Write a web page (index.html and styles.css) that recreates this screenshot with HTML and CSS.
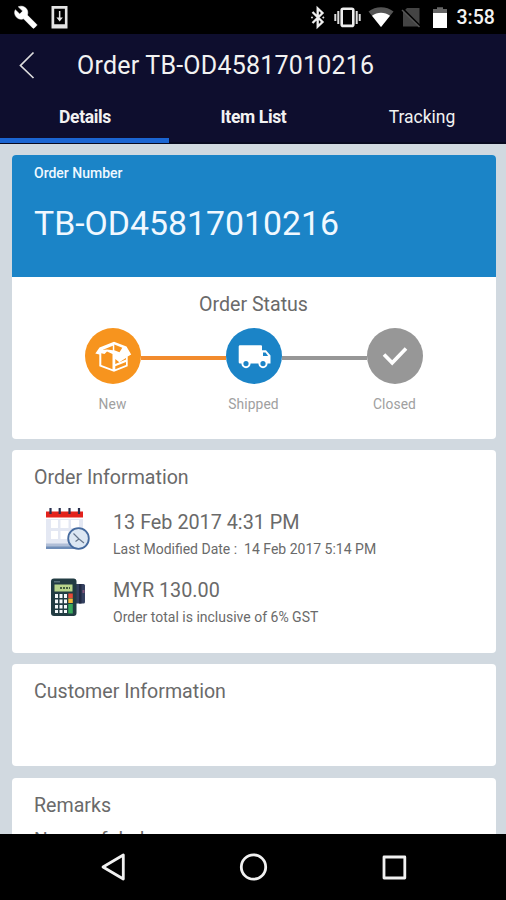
FILE: index.html
```html
<!DOCTYPE html>
<html lang="en">
<head>
<meta charset="utf-8">
<title>Order TB-OD45817010216</title>
<link rel="stylesheet" href="styles.css">
</head>
<body>
<div class="phone">
  <div class="statusbar">
    <svg class="status-icons" width="506" height="34" viewBox="0 0 506 34">
      <path fill="#fff" stroke="#fff" stroke-width=".6" d="M36.500 24.300l-9.200-9.200c1-2.400.4-5.100-1.500-7-2-2-5.100-2.400-7.500-1.300l4.400 4.300-3 3-4.400-4.300c-1.200 2.400-.7 5.500 1.300 7.500 1.900 1.900 4.700 2.400 7 1.500l9.200 9.200c.4.4 1 .4 1.400 0l2.300-2.300c.5-.4.5-1.100 0-1.400z"/>
      <path fill="#e4e4e4" fill-rule="evenodd" d="M51.500 6h16v22.500h-16zM54.200 8.700v15.600h10.700V8.700z"/>
      <path fill="#e4e4e4" d="M58.900 11h1.500v6.500h2.500l-3.250 4-3.250-4h2.500z"/>
      <path fill="none" stroke="#eee" stroke-width="2.300" d="M312.500 12l10 10-4.800 4.500V8.500l4.800 4.500-10 10"/>
      <path fill="#ddd" d="M312 16.300l1.200 1.200-1.200 1.200-1.200-1.200zM323.300 16.300l1.200 1.200-1.200 1.200-1.200-1.200z"/>
      <rect x="341.700" y="8.700" width="11.600" height="17.200" rx="1.500" fill="none" stroke="#eee" stroke-width="2.600"/>
      <path stroke="#ddd" stroke-width="2" d="M338.300 11v13M335.300 14v7M356.700 11v13M359.700 14v7"/>
      <path fill="#555" d="M368.500 11.500C375.500 5.800 386.500 5.800 393.500 11.500L381 27z"/>
      <path fill="#fff" d="M372 15.800C377 11.800 385 11.800 390 15.800L381 27z"/>
      <path fill="#444" d="M407 8h12.500v18.500H403V12z"/>
      <path stroke="#000" stroke-width="2" d="M402.500 8.500L421 27"/>
      <path stroke="#555" stroke-width="1.500" d="M402 10L419.500 27"/>
      <path fill="#666" d="M433 9h4V7.300h6V9h4v5h-14z"/>
      <path fill="#fff" d="M433 13h14v15h-14z"/>
    </svg>
    <span class="clock">3:58</span>
  </div>
  <header class="header">
    <div class="titlebar">
      <svg class="back" width="16" height="28" viewBox="0 0 16 28"><path d="M14.500 1.500L1.500 14.500l13 12.500" fill="none" stroke="#ddd" stroke-width="1.700"/></svg>
      <h1 class="title">Order TB-OD45817010216</h1>
    </div>
    <nav class="tabs">
      <span class="tab tab-strong tab-active">Details</span>
      <span class="tab tab-strong">Item List</span>
      <span class="tab">Tracking</span>
    </nav>
  </header>
  <main class="content">
    <section class="card order">
      <div class="hero">
        <p class="hero-label">Order Number</p>
        <p class="hero-number">TB-OD45817010216</p>
      </div>
      <h2 class="status-title">Order Status</h2>
      <div class="steps">
        <div class="step">
          <svg class="disc new" viewBox="0 0 56 56">
            <path fill="#fff" d="M10.300 25.500l4.200-6L29 13.800l12.500 4.700 4.700 8-3.500 2v9.800L29 43.800l-14.700-5.500V26.500z"/>
            <path fill="#f7941e" d="M16.300 25.200l3.200.9 2.500-2.600 5.500 2.500v15.200l-11.200-4.200zM29.300 16.500l8 3.200-2.800 4.600-5.200-2zM17.500 22l10.300-4.300v4.600L22 21.500zM30.300 31l4 3.200 6.700-4.200v1.600L30.300 36zM30.300 38.300L41 34v3l-10.700 4.200z"/>
          </svg>
          <span class="step-name">New</span>
        </div>
        <i class="link link-done"></i>
        <div class="step">
          <svg class="disc shipped" viewBox="0 0 56 56">
            <path fill="#fff" d="M14 17.200h21q1 0 1 1v4h4l4.500 5.300v8H14q-1.300 0-1.300-1.300V18.500q0-1.300 1.300-1.300z"/>
            <path fill="#1b84c7" d="M37 24.500h2.500l2.600 3.500H37z"/>
            <g fill="#1b84c7" stroke="#fff" stroke-width="2"><circle cx="20" cy="35.600" r="3.600"/><circle cx="37" cy="35.600" r="3.600"/></g>
          </svg>
          <span class="step-name">Shipped</span>
        </div>
        <i class="link"></i>
        <div class="step">
          <svg class="disc closed" viewBox="0 0 56 56"><path d="M17 26.500l8.200 8.300L39 20.500" fill="none" stroke="#fff" stroke-width="3.600"/></svg>
          <span class="step-name">Closed</span>
        </div>
      </div>
    </section>
    <section class="card info">
      <h2 class="card-title">Order Information</h2>
      <div class="row">
        <svg class="picture" width="56" height="52" viewBox="0 0 56 52">
          <path fill="#e4e8f3" d="M1 12h37v31H1z"/><path fill="#b0bed7" d="M1 36.500h37V41H1z"/><path fill="#6f8db8" d="M1 39.500h37V42H1z"/><path fill="#fff" d="M0 42h39v3H0z"/>
          <path fill="#e3221c" d="M1 4.500h37v6H1z"/>
          <path stroke="#28304f" stroke-width="2.200" d="M5.500 1v6M14.700 1v6M24.500 1v6M34 1v6"/>
          <path fill="#fff" d="M6 13h7v8H6zM15.500 13h8v8h-8zM26 13h8v8h-8zM6 24h7v8H6zM15.500 24h8v8h-8z"/>
          <circle cx="33.500" cy="31.500" r="10.300" fill="#dce7f3" stroke="#456a9e" stroke-width="1.800"/>
          <path d="M28.500 26.500l5.500 5.500 5 4M30.500 34.500l3.500-2.500" fill="none" stroke="#65758b" stroke-width="1.200"/>
        </svg>
        <div class="row-text"><p class="value">13 Feb 2017 4:31 PM</p><p class="note">Last Modified Date :&nbsp; 14 Feb 2017 5:14 PM</p></div>
      </div>
      <div class="row">
        <svg class="picture" width="56" height="52" viewBox="0 0 56 52">
          <g transform="translate(0 2)">
          <path fill="#34405f" d="M31 7h7.500q1.500 0 1.500 1.500V25q0 1.500-1.500 1.500H31z"/><path fill="#202942" d="M34 7h2.500v19.500H34z"/><path fill="#83557b" d="M37.500 13h2v3h-2z"/>
          <rect x="6" y="1.500" width="25.500" height="37.500" rx="3" fill="#223c43"/><path fill="#587078" d="M9 4h6v1.500H9z"/>
          <path fill="#b8d58c" d="M9.500 7.500h18v7h-18z"/><path stroke="#425f43" stroke-width="2" stroke-dasharray="2 1" d="M15 11h10"/>
          <path fill="#f5f8fa" d="M10 17h3v4h-3zM14.500 17h3v4h-3zM19 17h3v4h-3zM10 22.500h3v3.800h-3zM14.500 22.500h3v3.800h-3zM19 22.500h3v3.800h-3zM10 28h3v3.500h-3zM14.500 28h3v3.500h-3zM19 28h3v3.500h-3zM10 33h3v3h-3zM14.500 33h3v3h-3zM19 33h3v3h-3z"/>
          <path fill="#e94b38" d="M23.300 16.500h4.500V21h-4.500z"/><path fill="#f6b937" d="M23.300 21.500h4.500V26h-4.500z"/><path fill="#38aa5c" d="M23.300 27h4.500v9.500h-4.500z"/>
          </g>
        </svg>
        <div class="row-text"><p class="value">MYR 130.00</p><p class="note">Order total is inclusive of 6% GST</p></div>
      </div>
    </section>
    <section class="card customer"><h2 class="card-title">Customer Information</h2></section>
    <section class="card remarks"><h2 class="card-title">Remarks</h2><p class="remark">Name of dad</p></section>
  </main>
  <footer class="navbar">
    <svg width="506" height="67" viewBox="0 0 506 67" fill="none" stroke="#f1f1f1" stroke-width="2.800" stroke-linejoin="round"><path d="M123.300 21v24L103 33z"/><circle cx="253.500" cy="33" r="12.200"/><rect x="384" y="23" width="20.800" height="21"/></svg>
  </footer>
</div>
</body>
</html>
```
FILE: styles.css
```css
* { box-sizing: border-box; }
body { margin: 0; font-family: Roboto, "Liberation Sans", sans-serif; color: #6a6a6a; }
h1, h2, p { margin: 0; font-weight: 400; white-space: nowrap; }
.phone { width: 506px; height: 900px; overflow: hidden; display: flex; flex-direction: column; background: #d1d9e0; }
.statusbar { height: 34px; flex: none; background: #000; position: relative; }
.status-icons { display: block; }
.clock { position: absolute; left: 456.500px; top: 6px; font-size: 19.500px; line-height: 24px; font-weight: 500; color: #f2f2f2; }
.header { height: 110px; flex: none; background: #0e0e2e; border-bottom: 2px solid #080a20; color: #f2f2f2; display: flex; flex-direction: column; }
.titlebar { height: 62px; display: flex; align-items: center; padding-left: 19px; }
.back { margin-right: 42px; }
.title { font-size: 25px; line-height: 30px; letter-spacing: .22px; padding-top: 1px; }
.tabs { height: 47px; margin-bottom: -1px; display: grid; grid-template-columns: 169px 169px 168px; }
.tab { font-size: 17.500px; line-height: 22px; text-align: center; padding-top: 10px; }
.tab-strong { font-weight: 700; letter-spacing: -.35px; }
.tab-active { border-bottom: 5px solid #1b65d2; padding-left: 1px; }
.content { height: 690px; flex: none; overflow: hidden; padding: 11px 10.500px 0 11.500px; display: flex; flex-direction: column; gap: 11px; }
.card { flex: none; background: #fff; border-radius: 4px; overflow: hidden; }
.order { height: 284px; }
.hero { height: 122px; background: #1b84c7; color: #f0f8ff; padding: 9px 22.500px; }
.hero-label { font-size: 14px; line-height: 18px; font-weight: 500; }
.hero-number { font-size: 33.800px; line-height: 40px; margin-top: 22px; }
.status-title { font-size: 19.600px; line-height: 24px; text-align: center; margin-top: 16px; }
.steps { display: flex; padding: 11px 73px 0; }
.step { width: 56px; display: flex; flex-direction: column; align-items: center; }
.disc { width: 56px; height: 56px; border-radius: 50%; display: block; flex: none; }
.new { background: #f7941e; }
.shipped { background: #1b84c7; }
.closed { background: #979797; }
.link { height: 4px; flex: 1; background: #979797; margin-top: 28px; }
.link-done { background: #f28b2d; }
.step-name { font-size: 13.800px; line-height: 18px; margin-top: 11px; color: #a0a0a0; letter-spacing: .1px; }
.info { height: 203px; }
.card-title { font-size: 19.600px; line-height: 24px; padding: 16px 0 0 22.500px; }
.row { display: flex; padding-left: 33.500px; height: 67px; margin-top: 1px; }
.info .row:nth-of-type(1) { margin-top: 17px; }
.picture { display: block; flex: none; }
.row-text { padding-left: 12px; }
.value { font-size: 19.800px; line-height: 24px; padding-top: 4px; }
.note { font-size: 14px; line-height: 18px; margin-top: 5px; }
.customer { height: 102px; }
.remarks { height: 120px; margin-top: 1px; }
.remark { font-size: 19.200px; line-height: 24px; padding: 9px 0 0 22.500px; }
.navbar { height: 66px; flex: none; background: #000; }
```
